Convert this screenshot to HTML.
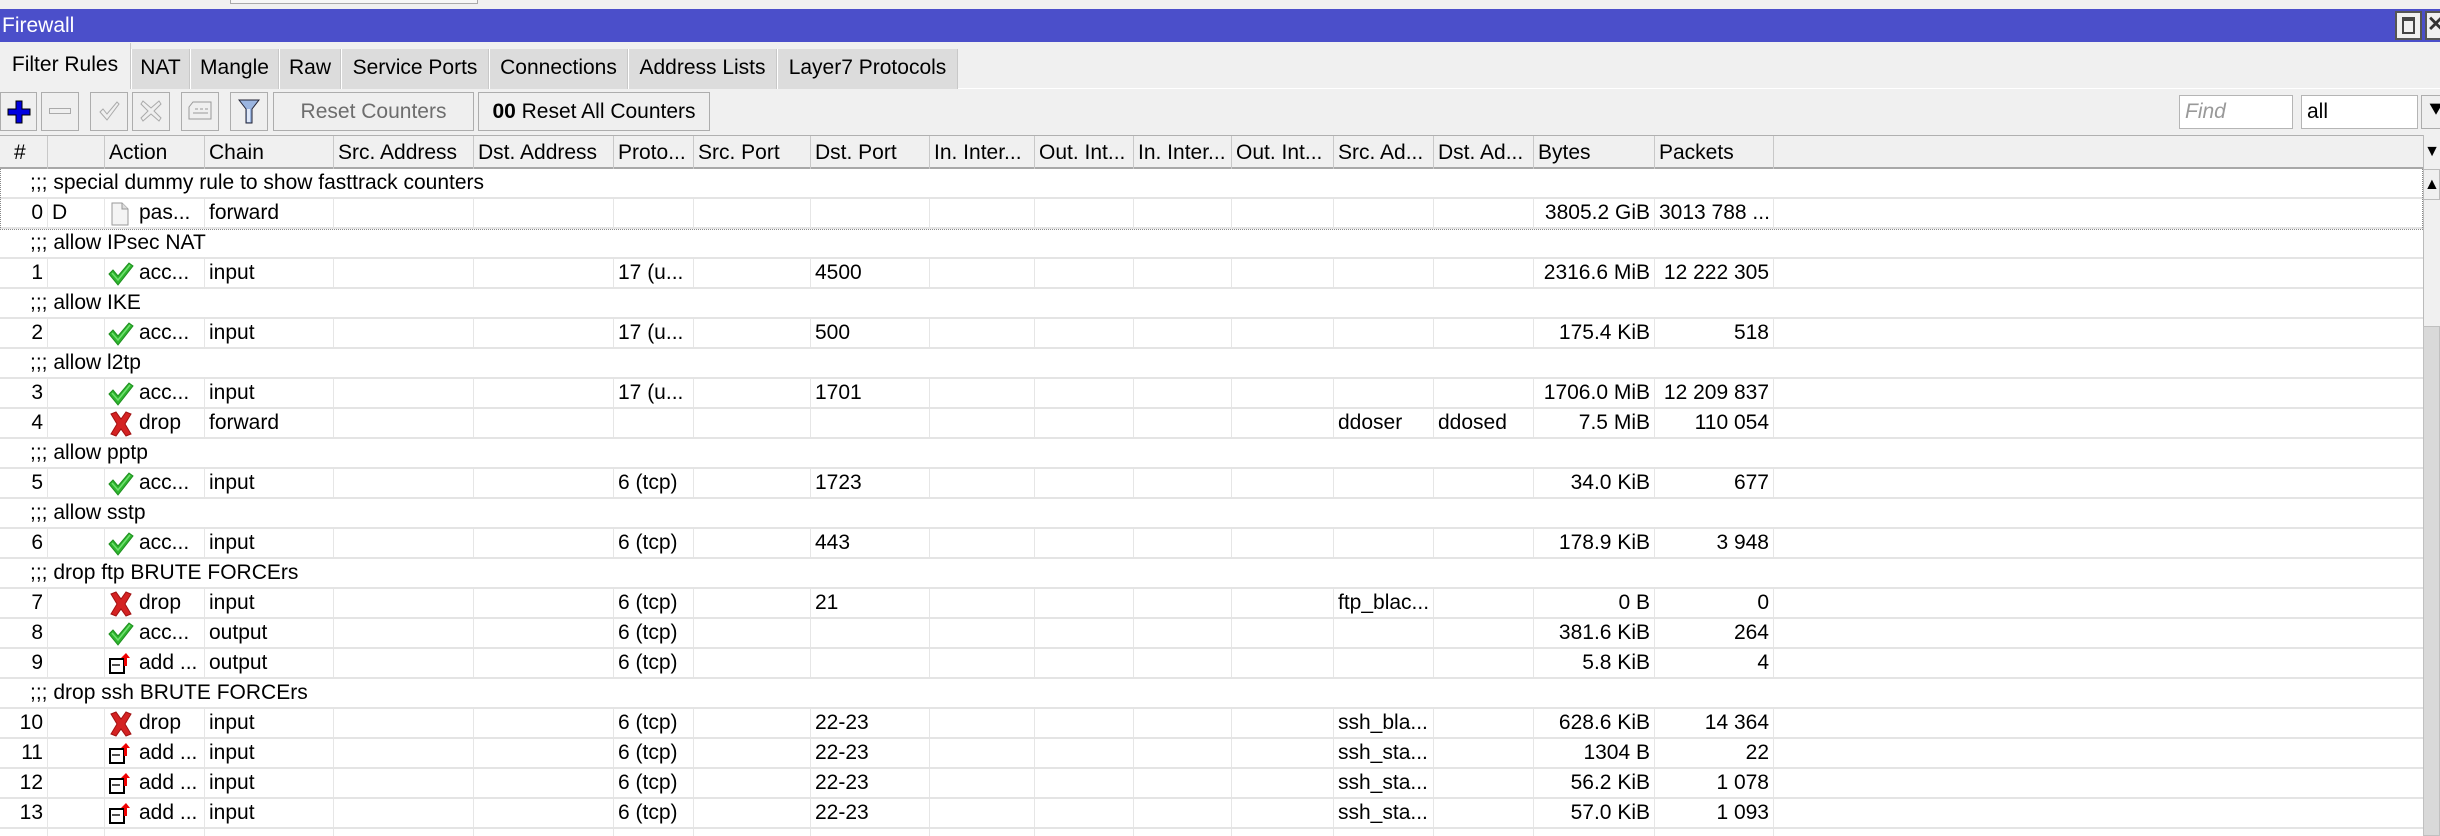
<!DOCTYPE html>
<html style="width:2440px;height:836px;overflow:hidden"><head><meta charset="utf-8"><style>
*{margin:0;padding:0;box-sizing:border-box}
body{width:2440px;height:836px;overflow:hidden;background:#f0f0f0;font-family:"Liberation Sans",Arial,sans-serif;font-size:21px;color:#000;position:relative}
.abs{position:absolute}
.title{left:0;top:9px;width:2440px;height:33px;background:#4b4fca;color:#fff;line-height:33px;padding-left:2px;font-size:21px}
.tb{position:absolute;top:2px;width:27px;height:29px;background:#f0f0f0;border:2px solid #555}
.tab{position:absolute;top:49px;height:40px;line-height:38px;background:#dcdcdc;border-left:1px solid #fff;border-right:1px solid #c8c8c8;text-align:center;font-size:21px}
.tab.on{top:43px;height:46px;background:#f0f0f0;line-height:44px}
.btn{position:absolute;top:92px;height:39px;border:1px solid #adadad;background:#efefef;text-align:center;line-height:37px;font-size:21px}
.hdr{position:absolute;left:0;top:135px;width:2423px;height:34px;background:#f0f0f0;border-bottom:2px solid #a8a8a8;border-top:1px solid #b0b0b0}
.h{position:absolute;top:0;height:33px;line-height:33px;border-right:1px solid #c8c8c8;padding-left:4px;white-space:nowrap;overflow:hidden}
.grid{position:absolute;left:0;top:169px;width:2423px;height:667px;background:#fff;overflow:hidden}
.r{position:absolute;left:0;width:2423px;height:30px;border-bottom:2px solid #e4e4e4}
.c{position:absolute;top:0;height:28px;line-height:28px;border-right:1px solid #e6e6e6;padding:0 4px;white-space:nowrap;overflow:hidden}
.cm{position:absolute;left:30px;top:0;line-height:28px;white-space:nowrap}
.k0{left:0;width:48px;text-align:right}.k1{left:48px;width:57px}.k2{left:105px;width:100px;padding-left:34px}.k3{left:205px;width:129px}
.k4{left:334px;width:140px}.k5{left:474px;width:140px}.k6{left:614px;width:80px}.k7{left:694px;width:117px}.k8{left:811px;width:119px}
.k9{left:930px;width:105px}.k10{left:1035px;width:99px}.k11{left:1134px;width:98px}.k12{left:1232px;width:102px}.k13{left:1334px;width:100px}
.k14{left:1434px;width:100px}.k15{left:1534px;width:121px;text-align:right}.k16{left:1655px;width:119px;text-align:right}
.ic{position:absolute;left:3px;top:2px}
.inp{position:absolute;top:95px;height:34px;background:#fff;border:1px solid #b5b5b5;line-height:32px;padding-left:5px;font-size:21px}
</style></head><body>
<div class="abs" style="left:230px;top:0;width:248px;height:4px;border:1px solid #aaa;border-top:none;background:#f7f7f7"></div>
<div class="abs title">Firewall
 <div class="tb" style="left:2395px"><div style="position:absolute;left:5px;top:4px;width:13px;height:17px;border:2px solid #444;border-top-width:4px"></div></div>
 <div class="tb" style="left:2425px;width:20px;color:#333;line-height:24px;font-weight:bold">✕</div>
</div>
<div class="tab on" style="left:0;width:131px;border-left:none">Filter Rules</div>
<div class="tab" style="left:131px;width:59px">NAT</div>
<div class="tab" style="left:190px;width:89px">Mangle</div>
<div class="tab" style="left:279px;width:62px">Raw</div>
<div class="tab" style="left:341px;width:148px">Service Ports</div>
<div class="tab" style="left:489px;width:139px">Connections</div>
<div class="tab" style="left:628px;width:149px">Address Lists</div>
<div class="tab" style="left:777px;width:181px">Layer7 Protocols</div>
<div class="abs" style="left:958px;top:88px;width:1482px;height:1px;background:#fff"></div>

<div class="btn" style="left:0;width:37px"><svg width="26" height="26" viewBox="0 0 26 26" style="margin-top:6px"><path d="M10 2h6v8h8v6h-8v8h-6v-8H2v-6h8z" fill="#0000e0" stroke="#000" stroke-width="1"/></svg></div>
<div class="btn" style="left:41px;width:38px"><div style="margin:15px auto 0;width:22px;height:6px;border:1px solid #aaa"></div></div>
<div class="btn" style="left:90px;width:38px"><svg width="24" height="24" viewBox="0 0 24 24" style="margin-top:6px"><path d="M3 13l3-3 4 5L20 3l2 2-12 16z" fill="none" stroke="#aaa"/></svg></div>
<div class="btn" style="left:132px;width:38px"><svg width="24" height="24" viewBox="0 0 24 24" style="margin-top:6px"><path d="M4 2l8 7 8-7 2 3-7 7 7 7-2 3-8-7-8 7-2-3 7-7-7-7z" fill="none" stroke="#aaa"/></svg></div>
<div class="btn" style="left:181px;width:38px"><svg width="26" height="22" viewBox="0 0 26 22" style="margin-top:7px"><path d="M6 2h18v17H2V7z" fill="none" stroke="#999"/><path d="M8 9h3M13 9h3M18 9h3M6 13h15" stroke="#999"/></svg></div>
<div class="btn" style="left:230px;width:38px"><svg width="22" height="28" viewBox="0 0 22 28" style="margin-top:5px"><path d="M1 2h20l-7 9v14h-6V11z" fill="#9bb5e0" stroke="#223"/><path d="M9 11h3v13H9z" fill="#dfe8f8"/></svg></div>
<div class="btn" style="left:273px;width:201px;color:#6d6d6d">Reset Counters</div>
<div class="btn" style="left:478px;width:232px"><b>00</b> Reset All Counters</div>
<div class="inp" style="left:2179px;width:114px;color:#999;font-style:italic">Find</div>
<div class="inp" style="left:2301px;width:117px">all</div>
<div class="btn" style="left:2421px;top:95px;width:30px;height:34px;line-height:30px;font-weight:bold">⯆</div>

<div class="hdr">
<div class="h" style="left:0;width:48px;padding-left:14px">#</div><div class="h" style="left:48px;width:57px"></div>
<div class="h" style="left:105px;width:100px">Action</div><div class="h" style="left:205px;width:129px">Chain</div>
<div class="h" style="left:334px;width:140px">Src. Address</div><div class="h" style="left:474px;width:140px">Dst. Address</div>
<div class="h" style="left:614px;width:80px">Proto...</div><div class="h" style="left:694px;width:117px">Src. Port</div>
<div class="h" style="left:811px;width:119px">Dst. Port</div><div class="h" style="left:930px;width:105px">In. Inter...</div>
<div class="h" style="left:1035px;width:99px">Out. Int...</div><div class="h" style="left:1134px;width:98px">In. Inter...</div>
<div class="h" style="left:1232px;width:102px">Out. Int...</div><div class="h" style="left:1334px;width:100px">Src. Ad...</div>
<div class="h" style="left:1434px;width:100px">Dst. Ad...</div><div class="h" style="left:1534px;width:121px">Bytes</div>
<div class="h" style="left:1655px;width:119px">Packets</div>
</div>
<div class="abs" style="left:2423px;top:135px;width:17px;height:34px;background:#f0f0f0;border-left:1px solid #bbb;font-size:16px;line-height:34px;text-align:center">▼</div>
<div class="abs" style="left:2423px;top:169px;width:17px;height:31px;background:#f0f0f0;border:1px solid #bbb;font-size:16px;line-height:30px;text-align:center">▲</div>
<div class="abs" style="left:2423px;top:200px;width:17px;height:126px;background:#f0f0f0;border-left:1px solid #bbb"></div>
<div class="abs" style="left:2423px;top:326px;width:17px;height:510px;background:#d9d9d9;border:1px solid #c0c0c0"></div>

<div class="grid">
<svg width="0" height="0" style="position:absolute"><defs>
<g id="ok"><path d="M1 13l4-4 5 6L21 2l4 3-15 19z" fill="#2fb52f" stroke="#1f8f1f" stroke-width="1"/><path d="M4 12l6 7L22 4" fill="none" stroke="#6fe06f" stroke-width="1.5"/></g>
<g id="no"><path d="M3 3l5-2 5 7 5-7 5 2-6 10 6 10-5 2-5-7-5 7-5-2 6-10z" fill="#d42222" stroke="#a01010" stroke-width="1"/></g>
<g id="ad"><rect x="2" y="8" width="14" height="14" fill="#fff" stroke="#000" stroke-width="2"/><path d="M4 14h8" stroke="#555" stroke-width="2"/><path d="M18 2l4 5h-3v8h-3V7h-3z" fill="#e00"/></g>
<g id="pg"><path d="M4 2h10l6 6v16H4z" fill="#f4f4f4" stroke="#999"/><path d="M14 2v6h6" fill="#ddd" stroke="#999"/></g>
</defs></svg>

<div class="r" style="top:0"><div class="cm">;;; special dummy rule to show fasttrack counters</div></div>
<div class="r" style="top:30px"><div class="c k0">0</div><div class="c k1">D</div><div class="c k2"><svg class="ic" width="26" height="26" viewBox="0 0 26 26"><use href="#pg"/></svg>pas...</div><div class="c k3">forward</div><div class="c k4"></div><div class="c k5"></div><div class="c k6"></div><div class="c k7"></div><div class="c k8"></div><div class="c k9"></div><div class="c k10"></div><div class="c k11"></div><div class="c k12"></div><div class="c k13"></div><div class="c k14"></div><div class="c k15">3805.2 GiB</div><div class="c k16" style="text-align:left">3013 788 ...</div></div>
<div class="abs" style="left:0;top:0;width:2423px;height:61px;border:1px dotted #888;border-top:none"></div>

<div class="r" style="top:60px"><div class="cm">;;; allow IPsec NAT</div></div>
<div class="r" style="top:90px"><div class="c k0">1</div><div class="c k1"></div><div class="c k2"><svg class="ic" width="26" height="26" viewBox="0 0 26 26"><use href="#ok"/></svg>acc...</div><div class="c k3">input</div><div class="c k4"></div><div class="c k5"></div><div class="c k6">17 (u...</div><div class="c k7"></div><div class="c k8">4500</div><div class="c k9"></div><div class="c k10"></div><div class="c k11"></div><div class="c k12"></div><div class="c k13"></div><div class="c k14"></div><div class="c k15">2316.6 MiB</div><div class="c k16">12 222 305</div></div>
<div class="r" style="top:120px"><div class="cm">;;; allow IKE</div></div>
<div class="r" style="top:150px"><div class="c k0">2</div><div class="c k1"></div><div class="c k2"><svg class="ic" width="26" height="26" viewBox="0 0 26 26"><use href="#ok"/></svg>acc...</div><div class="c k3">input</div><div class="c k4"></div><div class="c k5"></div><div class="c k6">17 (u...</div><div class="c k7"></div><div class="c k8">500</div><div class="c k9"></div><div class="c k10"></div><div class="c k11"></div><div class="c k12"></div><div class="c k13"></div><div class="c k14"></div><div class="c k15">175.4 KiB</div><div class="c k16">518</div></div>
<div class="r" style="top:180px"><div class="cm">;;; allow l2tp</div></div>
<div class="r" style="top:210px"><div class="c k0">3</div><div class="c k1"></div><div class="c k2"><svg class="ic" width="26" height="26" viewBox="0 0 26 26"><use href="#ok"/></svg>acc...</div><div class="c k3">input</div><div class="c k4"></div><div class="c k5"></div><div class="c k6">17 (u...</div><div class="c k7"></div><div class="c k8">1701</div><div class="c k9"></div><div class="c k10"></div><div class="c k11"></div><div class="c k12"></div><div class="c k13"></div><div class="c k14"></div><div class="c k15">1706.0 MiB</div><div class="c k16">12 209 837</div></div>
<div class="r" style="top:240px"><div class="c k0">4</div><div class="c k1"></div><div class="c k2"><svg class="ic" width="26" height="26" viewBox="0 0 26 26"><use href="#no"/></svg>drop</div><div class="c k3">forward</div><div class="c k4"></div><div class="c k5"></div><div class="c k6"></div><div class="c k7"></div><div class="c k8"></div><div class="c k9"></div><div class="c k10"></div><div class="c k11"></div><div class="c k12"></div><div class="c k13">ddoser</div><div class="c k14">ddosed</div><div class="c k15">7.5 MiB</div><div class="c k16">110 054</div></div>
<div class="r" style="top:270px"><div class="cm">;;; allow pptp</div></div>
<div class="r" style="top:300px"><div class="c k0">5</div><div class="c k1"></div><div class="c k2"><svg class="ic" width="26" height="26" viewBox="0 0 26 26"><use href="#ok"/></svg>acc...</div><div class="c k3">input</div><div class="c k4"></div><div class="c k5"></div><div class="c k6">6 (tcp)</div><div class="c k7"></div><div class="c k8">1723</div><div class="c k9"></div><div class="c k10"></div><div class="c k11"></div><div class="c k12"></div><div class="c k13"></div><div class="c k14"></div><div class="c k15">34.0 KiB</div><div class="c k16">677</div></div>
<div class="r" style="top:330px"><div class="cm">;;; allow sstp</div></div>
<div class="r" style="top:360px"><div class="c k0">6</div><div class="c k1"></div><div class="c k2"><svg class="ic" width="26" height="26" viewBox="0 0 26 26"><use href="#ok"/></svg>acc...</div><div class="c k3">input</div><div class="c k4"></div><div class="c k5"></div><div class="c k6">6 (tcp)</div><div class="c k7"></div><div class="c k8">443</div><div class="c k9"></div><div class="c k10"></div><div class="c k11"></div><div class="c k12"></div><div class="c k13"></div><div class="c k14"></div><div class="c k15">178.9 KiB</div><div class="c k16">3 948</div></div>
<div class="r" style="top:390px"><div class="cm">;;; drop ftp BRUTE FORCErs</div></div>
<div class="r" style="top:420px"><div class="c k0">7</div><div class="c k1"></div><div class="c k2"><svg class="ic" width="26" height="26" viewBox="0 0 26 26"><use href="#no"/></svg>drop</div><div class="c k3">input</div><div class="c k4"></div><div class="c k5"></div><div class="c k6">6 (tcp)</div><div class="c k7"></div><div class="c k8">21</div><div class="c k9"></div><div class="c k10"></div><div class="c k11"></div><div class="c k12"></div><div class="c k13">ftp_blac...</div><div class="c k14"></div><div class="c k15">0 B</div><div class="c k16">0</div></div>
<div class="r" style="top:450px"><div class="c k0">8</div><div class="c k1"></div><div class="c k2"><svg class="ic" width="26" height="26" viewBox="0 0 26 26"><use href="#ok"/></svg>acc...</div><div class="c k3">output</div><div class="c k4"></div><div class="c k5"></div><div class="c k6">6 (tcp)</div><div class="c k7"></div><div class="c k8"></div><div class="c k9"></div><div class="c k10"></div><div class="c k11"></div><div class="c k12"></div><div class="c k13"></div><div class="c k14"></div><div class="c k15">381.6 KiB</div><div class="c k16">264</div></div>
<div class="r" style="top:480px"><div class="c k0">9</div><div class="c k1"></div><div class="c k2"><svg class="ic" width="26" height="26" viewBox="0 0 26 26"><use href="#ad"/></svg>add ...</div><div class="c k3">output</div><div class="c k4"></div><div class="c k5"></div><div class="c k6">6 (tcp)</div><div class="c k7"></div><div class="c k8"></div><div class="c k9"></div><div class="c k10"></div><div class="c k11"></div><div class="c k12"></div><div class="c k13"></div><div class="c k14"></div><div class="c k15">5.8 KiB</div><div class="c k16">4</div></div>
<div class="r" style="top:510px"><div class="cm">;;; drop ssh BRUTE FORCErs</div></div>
<div class="r" style="top:540px"><div class="c k0">10</div><div class="c k1"></div><div class="c k2"><svg class="ic" width="26" height="26" viewBox="0 0 26 26"><use href="#no"/></svg>drop</div><div class="c k3">input</div><div class="c k4"></div><div class="c k5"></div><div class="c k6">6 (tcp)</div><div class="c k7"></div><div class="c k8">22-23</div><div class="c k9"></div><div class="c k10"></div><div class="c k11"></div><div class="c k12"></div><div class="c k13">ssh_bla...</div><div class="c k14"></div><div class="c k15">628.6 KiB</div><div class="c k16">14 364</div></div>
<div class="r" style="top:570px"><div class="c k0">11</div><div class="c k1"></div><div class="c k2"><svg class="ic" width="26" height="26" viewBox="0 0 26 26"><use href="#ad"/></svg>add ...</div><div class="c k3">input</div><div class="c k4"></div><div class="c k5"></div><div class="c k6">6 (tcp)</div><div class="c k7"></div><div class="c k8">22-23</div><div class="c k9"></div><div class="c k10"></div><div class="c k11"></div><div class="c k12"></div><div class="c k13">ssh_sta...</div><div class="c k14"></div><div class="c k15">1304 B</div><div class="c k16">22</div></div>
<div class="r" style="top:600px"><div class="c k0">12</div><div class="c k1"></div><div class="c k2"><svg class="ic" width="26" height="26" viewBox="0 0 26 26"><use href="#ad"/></svg>add ...</div><div class="c k3">input</div><div class="c k4"></div><div class="c k5"></div><div class="c k6">6 (tcp)</div><div class="c k7"></div><div class="c k8">22-23</div><div class="c k9"></div><div class="c k10"></div><div class="c k11"></div><div class="c k12"></div><div class="c k13">ssh_sta...</div><div class="c k14"></div><div class="c k15">56.2 KiB</div><div class="c k16">1 078</div></div>
<div class="r" style="top:630px"><div class="c k0">13</div><div class="c k1"></div><div class="c k2"><svg class="ic" width="26" height="26" viewBox="0 0 26 26"><use href="#ad"/></svg>add ...</div><div class="c k3">input</div><div class="c k4"></div><div class="c k5"></div><div class="c k6">6 (tcp)</div><div class="c k7"></div><div class="c k8">22-23</div><div class="c k9"></div><div class="c k10"></div><div class="c k11"></div><div class="c k12"></div><div class="c k13">ssh_sta...</div><div class="c k14"></div><div class="c k15">57.0 KiB</div><div class="c k16">1 093</div></div>
<div class="r" style="top:660px;height:7px;border-bottom:none"><div class="c k0" style="height:7px"></div><div class="c k1" style="height:7px"></div><div class="c k2" style="height:7px"></div><div class="c k3" style="height:7px"></div><div class="c k4" style="height:7px"></div><div class="c k5" style="height:7px"></div><div class="c k6" style="height:7px"></div><div class="c k7" style="height:7px"></div><div class="c k8" style="height:7px"></div><div class="c k9" style="height:7px"></div><div class="c k10" style="height:7px"></div><div class="c k11" style="height:7px"></div><div class="c k12" style="height:7px"></div><div class="c k13" style="height:7px"></div><div class="c k14" style="height:7px"></div><div class="c k15" style="height:7px"></div><div class="c k16" style="height:7px"></div></div>
</div>
</body></html>
